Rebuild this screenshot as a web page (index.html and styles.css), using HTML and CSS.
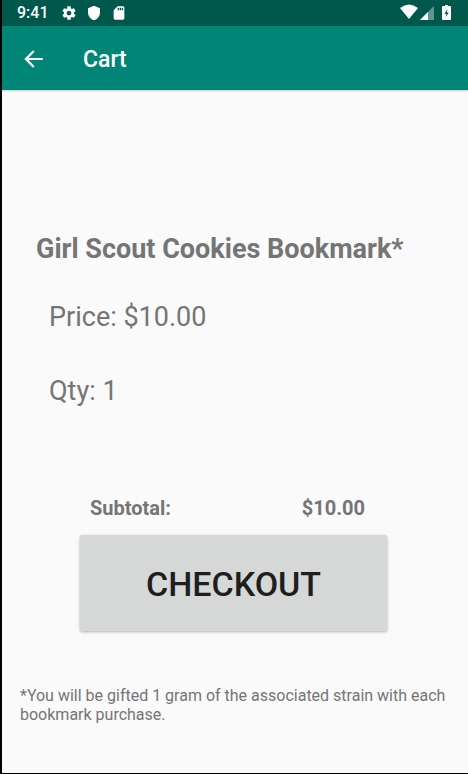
FILE: index.html
```html
<!DOCTYPE html>
<html lang="en">
<head>
<meta charset="utf-8">
<meta name="viewport" content="width=device-width, initial-scale=1">
<title>Cart</title>
<link rel="stylesheet" href="styles.css">
</head>
<body>
<div class="status-bar">
  <span class="clock">9:41</span>
  <div class="notices">
    <svg class="icon" viewBox="0 0 24 24" aria-hidden="true"><path d="M19.43 12.98c.04-.32.07-.64.07-.98s-.03-.66-.07-.98l2.11-1.65c.19-.15.24-.42.12-.64l-2-3.46c-.12-.22-.39-.3-.61-.22l-2.49 1c-.52-.4-1.08-.73-1.69-.98l-.38-2.65C14.46 2.18 14.25 2 14 2h-4c-.25 0-.46.18-.49.42l-.38 2.65c-.61.25-1.17.59-1.69.98l-2.49-1c-.23-.09-.49 0-.61.22l-2 3.46c-.13.22-.07.49.12.64l2.11 1.65c-.04.32-.07.65-.07.98s.03.66.07.98l-2.11 1.65c-.19.15-.24.42-.12.64l2 3.46c.12.22.39.3.61.22l2.49-1c.52.4 1.08.73 1.69.98l.38 2.65c.03.24.24.42.49.42h4c.25 0 .46-.18.49-.42l.38-2.65c.61-.25 1.17-.59 1.69-.98l2.49 1c.23.09.49 0 .61-.22l2-3.46c.12-.22.07-.49-.12-.64l-2.11-1.65zM12 15.5c-1.930 0-3.500-1.570-3.500-3.500s1.570-3.500 3.500-3.500 3.500 1.570 3.500 3.500-1.570 3.500-3.500 3.500z"/></svg>
    <svg class="icon" viewBox="0 0 24 24" aria-hidden="true"><path d="M12 1L3 5v6c0 5.550 3.840 10.740 9 12 5.160-1.260 9-6.450 9-12V5l-9-4z"/></svg>
    <svg class="icon" viewBox="0 0 24 24" aria-hidden="true"><path d="M18 2h-8L4.020 8 4 20c0 1.100.9 2 2 2h12c1.100 0 2-.9 2-2V4c0-1.100-.9-2-2-2zm-6 6h-2V4h2v4zm3 0h-2V4h2v4zm3 0h-2V4h2v4z"/></svg>
  </div>
  <svg class="radios" viewBox="0 0 54 18" aria-hidden="true">
    <path d="M0 4Q9-3 18 4L9 15z"/>
    <path class="faint" d="M34 2v14H20z"/>
    <path d="M28 8v8h-8z"/>
    <path fill-rule="evenodd" d="M45 1h3v1h2q1 0 1 1v12q0 1-1 1h-7q-1 0-1-1V3q0-1 1-1h2zM47.500 5L44.500 10H46.500L45.500 13.500 48.800 8.500H46.800z"/>
  </svg>
</div>
<header class="app-bar">
  <button class="back" type="button" aria-label="Back">
    <svg viewBox="0 0 24 24" aria-hidden="true"><path d="M21 11H7.830l5.590-5.590L12 4l-8 8 8 8 1.410-1.410L7.830 13H21v-2z"/></svg>
  </button>
  <h1 class="title">Cart</h1>
</header>
<main class="cart">
  <section class="item">
    <h2 class="name">Girl Scout Cookies Bookmark*</h2>
    <p class="detail">Price: $10.00</p>
    <p class="detail">Qty: 1</p>
  </section>
  <section class="summary">
    <div class="subtotal"><span>Subtotal:</span><span>$10.00</span></div>
    <button class="checkout" type="button">CHECKOUT</button>
  </section>
  <p class="note">*You will be gifted 1 gram of the associated strain with each bookmark purchase.</p>
</main>
</body>
</html>
```
FILE: styles.css
```css
* {
  box-sizing: border-box;
}

body {
  display: flex;
  flex-direction: column;
  min-height: 100vh;
  margin: 0;
  border-left: 2px solid #000;
  border-bottom: 1px solid #000;
  background: #fafafa;
  color: #757575;
  font-family: Roboto, "Liberation Sans", sans-serif;
}

h1, h2, p {
  margin: 0;
}

button {
  border: 0;
  font-family: inherit;
}

.status-bar {
  display: flex;
  align-items: center;
  height: 26px;
  padding: 0 14px 0 15px;
  background: #00574b;
  color: #fff;
}

.clock {
  font-size: 16px;
  font-weight: 500;
  line-height: 26px;
}

.notices {
  display: flex;
  gap: 9px;
  margin-left: 12px;
}

.icon {
  width: 16px;
  height: 16px;
  fill: #fff;
}

.radios {
  width: 54px;
  height: 18px;
  margin-left: auto;
  fill: #fff;
}

.faint {
  fill: #5f968e;
}

.app-bar {
  display: flex;
  align-items: center;
  height: 64px;
  padding: 2px 18px 0;
  background: #008577;
  box-shadow: 0 1px 2px rgba(0, 0, 0, 0.2);
  color: #fff;
}

.back {
  width: 26px;
  height: 26px;
  padding: 0;
  background: none;
}

.back svg {
  display: block;
  fill: #fff;
}

.title {
  margin-left: 37px;
  font-size: 23px;
  font-weight: 500;
}

.cart {
  flex: 1;
  padding: 143px 18px 40px;
}

.item {
  padding: 0 16px;
}

.name {
  font-size: 27px;
  font-weight: 700;
  line-height: 32px;
}

.detail {
  margin-top: 42px;
  padding-left: 13px;
  font-size: 27px;
  line-height: 32px;
}

.name + .detail {
  margin-top: 36px;
}

.summary {
  margin: 89px 63px 0 60px;
}

.subtotal {
  display: flex;
  justify-content: space-between;
  padding: 0 22px 0 10px;
  font-size: 20px;
  font-weight: 700;
  line-height: 24px;
}

.checkout {
  display: block;
  width: 100%;
  margin-top: 15px;
  padding: 29px 0 27px;
  border-radius: 2px;
  background: #d6d7d7;
  box-shadow: 0 1px 3px rgba(0, 0, 0, 0.3);
  color: #1e1e1e;
  font-size: 34px;
  font-weight: 500;
  line-height: 40px;
}

.note {
  margin-top: 55px;
  font-size: 16px;
  line-height: 19px;
}
```
